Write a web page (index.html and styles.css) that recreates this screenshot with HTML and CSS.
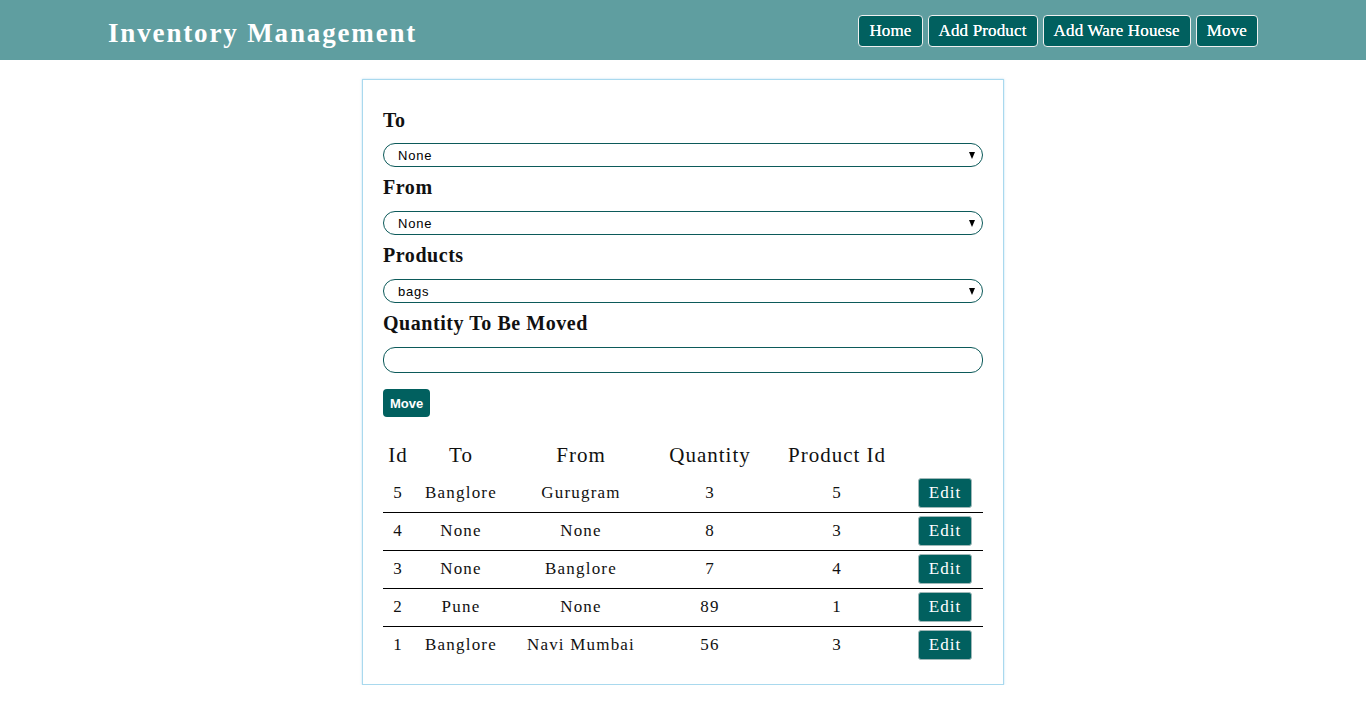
FILE: index.html
```html
<!DOCTYPE html>
<html>
<head>
<meta charset="utf-8">
<title>Inventory Management</title>
<link rel="stylesheet" href="styles.css">
</head>
<body>
<header class="navbar">
  <div class="nav-inner">
    <div class="brand">Inventory Management</div>
    <nav class="nav-links">
      <button class="nav-btn">Home</button>
      <button class="nav-btn">Add Product</button>
      <button class="nav-btn">Add Ware Houese</button>
      <button class="nav-btn">Move</button>
    </nav>
  </div>
</header>
<main class="card">
  <label class="field-label">To</label>
  <div class="select-wrap"><select class="field-select"><option>None</option></select></div>
  <label class="field-label">From</label>
  <div class="select-wrap"><select class="field-select"><option>None</option></select></div>
  <label class="field-label">Products</label>
  <div class="select-wrap"><select class="field-select"><option>bags</option></select></div>
  <label class="field-label">Quantity To Be Moved</label>
  <input class="field-input" type="text">
  <button class="move-btn">Move</button>
  <table class="moves">
    <colgroup>
      <col class="c-id"><col class="c-to"><col class="c-from"><col class="c-qty"><col class="c-pid"><col class="c-edit">
    </colgroup>
    <thead>
      <tr><th>Id</th><th>To</th><th>From</th><th>Quantity</th><th>Product Id</th><th></th></tr>
    </thead>
    <tbody>
      <tr><td>5</td><td>Banglore</td><td>Gurugram</td><td>3</td><td>5</td><td><button class="edit-btn">Edit</button></td></tr>
      <tr><td>4</td><td>None</td><td>None</td><td>8</td><td>3</td><td><button class="edit-btn">Edit</button></td></tr>
      <tr><td>3</td><td>None</td><td>Banglore</td><td>7</td><td>4</td><td><button class="edit-btn">Edit</button></td></tr>
      <tr><td>2</td><td>Pune</td><td>None</td><td>89</td><td>1</td><td><button class="edit-btn">Edit</button></td></tr>
      <tr><td>1</td><td>Banglore</td><td>Navi Mumbai</td><td>56</td><td>3</td><td><button class="edit-btn">Edit</button></td></tr>
    </tbody>
  </table>
</main>
</body>
</html>
```

FILE: styles.css
```css
* { box-sizing: border-box; }
body {
  margin: 0;
  font-family: "Liberation Serif", "DejaVu Serif", serif;
  color: #111;
  background: #fff;
}
.navbar {
  background: #5f9ea0;
  height: 60px;
}
.nav-inner {
  max-width: 1150px;
  margin: 0 auto;
  height: 60px;
  display: flex;
  align-items: center;
  justify-content: space-between;
}
.brand {
  color: #fff;
  font-size: 27px;
  font-weight: bold;
  letter-spacing: 1.85px;
  padding-top: 7px;
}
.nav-links {
  display: flex;
  gap: 5px;
  padding-top: 1px;
}
.nav-btn {
  font-family: "Liberation Serif", "DejaVu Serif", serif;
  font-size: 17px;
  color: #fff;
  background: #01605f;
  border: 1px solid #f0f0f0;
  border-radius: 4px;
  height: 32px;
  padding: 0 10px;
  letter-spacing: 0.15px;
  text-shadow: 0 0 0.3px #fff;
}
.card {
  width: 642px;
  margin: 19px auto 0;
  border: 1px solid #a9d9ee;
  box-shadow: 0 0 2px rgba(120, 190, 230, 0.5);
  padding: 20px 20px 20px;
  display: flex;
  flex-direction: column;
  align-items: flex-start;
}
.field-label {
  display: block;
  font-size: 20px;
  font-weight: bold;
  line-height: 24px;
  margin: 8px 0 12px;
  letter-spacing: 0.55px;
}
.field-label:first-child { margin-bottom: 11px; }
.select-wrap {
  position: relative;
  width: 600px;
  height: 24px;
}
.select-wrap::after {
  content: "";
  position: absolute;
  right: 8px;
  top: 9px;
  border-left: 3.5px solid transparent;
  border-right: 3.5px solid transparent;
  border-top: 7px solid #000;
  pointer-events: none;
}
.field-select {
  appearance: none;
  -webkit-appearance: none;
  display: block;
  width: 600px;
  height: 24px;
  border: 1px solid #0c5a5a;
  border-radius: 12px;
  font-family: "Liberation Sans", Arial, sans-serif;
  font-size: 13px;
  letter-spacing: 0.8px;
  padding-left: 14px;
  background: #fff;
  color: #000;
}
.field-input {
  width: 600px;
  height: 26px;
  border: 1px solid #0c5a5a;
  border-radius: 12px;
  padding: 0 12px;
}
.move-btn {
  margin-top: 16px;
  height: 28px;
  padding: 0 7px;
  background: #01605f;
  color: #fff;
  border: none;
  border-radius: 4px;
  font-family: "Liberation Sans", Arial, sans-serif;
  font-weight: bold;
  font-size: 13px;
}
.moves {
  width: 600px;
  margin-top: 20px;
  border-collapse: collapse;
  table-layout: fixed;
}
.c-id { width: 30px; }
.c-to { width: 96px; }
.c-from { width: 144px; }
.c-qty { width: 114px; }
.c-pid { width: 140px; }
.c-edit { width: 76px; }
.moves th {
  font-weight: normal;
  font-size: 21px;
  letter-spacing: 1px;
  height: 37px;
  padding: 0;
  text-align: center;
  vertical-align: middle;
}
.moves td {
  font-size: 17px;
  letter-spacing: 1.2px;
  height: 38px;
  padding: 0;
  text-align: center;
  vertical-align: middle;
}
.moves tbody tr { border-bottom: 1px solid #000; }
.moves tbody tr:last-child { border-bottom: none; }
.edit-btn {
  font-family: "Liberation Serif", "DejaVu Serif", serif;
  font-size: 17px;
  letter-spacing: 1px;
  color: #fff;
  background: #01605f;
  border: 1px solid #9fb8b8;
  border-radius: 3px;
  height: 30px;
  width: 54px;
  padding: 0;
}
```
